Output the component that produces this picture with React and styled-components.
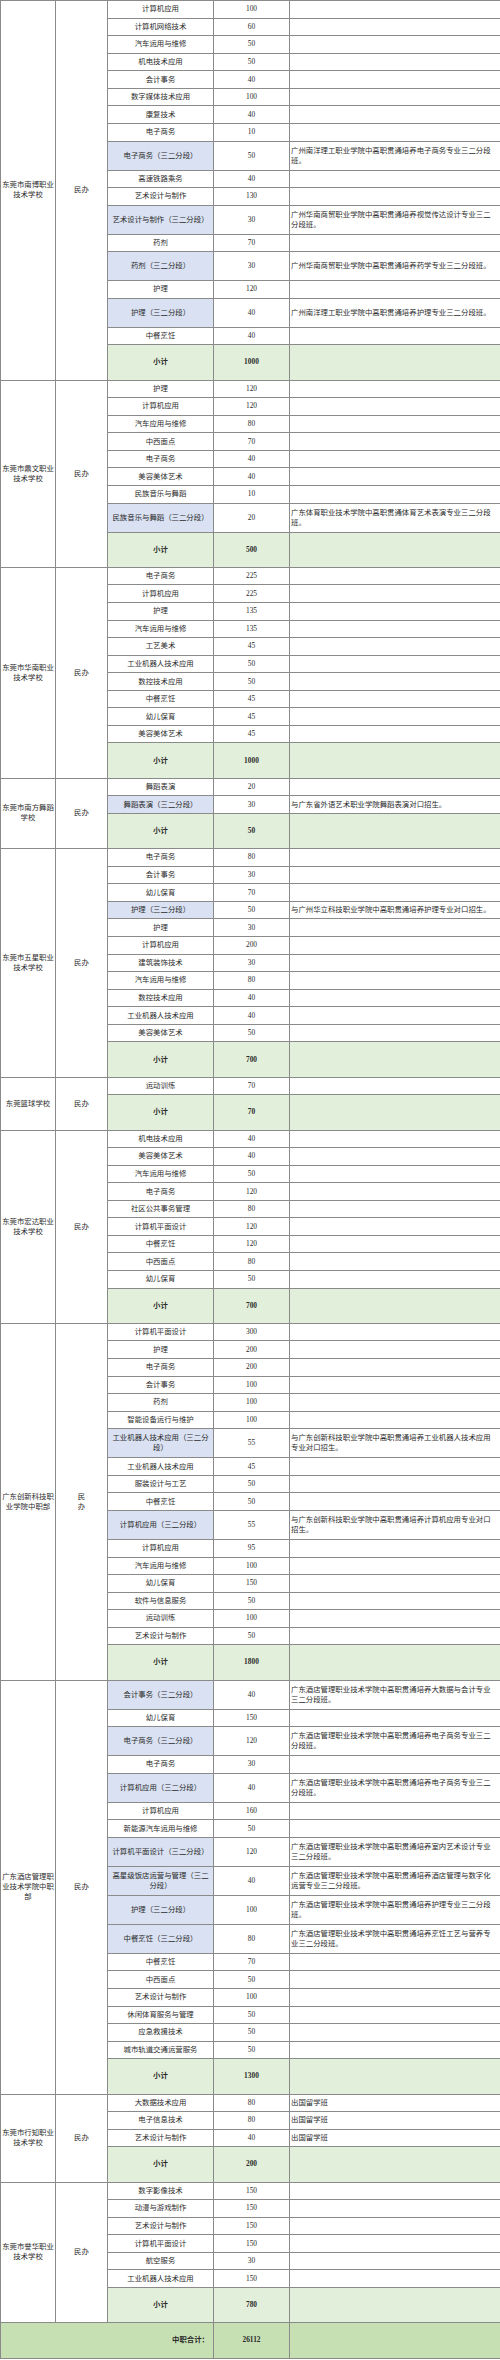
import React from "react"
import styled, { createGlobalStyle } from "styled-components"

const GlobalStyle = createGlobalStyle`
  body {
    margin: 0;
    background: #fff;
  }
`

const HEIGHTS = { row: 17.57, tall: 29, sub: 35.3 }

const TONES = {
  blue: "#d9e1f2",
  sub: "#e2efda",
  total: "#c6e0b4",
}

// the sheet is a slice of a longer table, so the grand total covers more schools than listed here
const GRAND_TOTAL = 26112

const Sheet = styled.table`
  width: 500px;
  table-layout: fixed;
  border-collapse: collapse;
  font-family: "Liberation Serif", "Noto Sans CJK SC", serif;
  font-size: 7.4px;
  line-height: 10px;
  color: #2b2b2b;
`

const Col = styled.col`
  width: ${props => props.$w}px;
`

const Row = styled.tr`
  height: ${props => HEIGHTS[props.$kind || "row"]}px;
`

const Cell = styled.td`
  border: 1px solid #8a8a8a;
  padding: 0 1px;
  text-align: center;
  vertical-align: middle;
  background: ${props => (props.$tone ? TONES[props.$tone] : "#fff")};
  font-weight: ${props => (props.$bold ? 700 : 400)};
  overflow-wrap: anywhere;
`

const NoteCell = styled(Cell)`
  text-align: left;
  padding: 0 3px 0 1px;
`

const TotalLabel = styled(Cell)`
  text-align: right;
  padding-right: 4px;
`

const n = (m, c) => ({ m, c })
const hl = (m, c, note, tall = true) => ({ m, c, note, blue: true, tall })
const out = (m, c) => ({ m, c, note: "出国留学班" })

const schools = [
  {
    name: "东莞市南博职业技术学校",
    type: "民办",
    total: 1000,
    rows: [
      n("计算机应用", 100),
      n("计算机网络技术", 60),
      n("汽车运用与维修", 50),
      n("机电技术应用", 50),
      n("会计事务", 40),
      n("数字媒体技术应用", 100),
      n("康复技术", 40),
      n("电子商务", 10),
      hl("电子商务（三二分段）", 50, "广州南洋理工职业学院中高职贯通培养电子商务专业三二分段班。"),
      n("高速铁路乘务", 40),
      n("艺术设计与制作", 130),
      hl("艺术设计与制作（三二分段）", 30, "广州华南商贸职业学院中高职贯通培养视觉传达设计专业三二分段班。"),
      n("药剂", 70),
      hl("药剂（三二分段）", 30, "广州华南商贸职业学院中高职贯通培养药学专业三二分段班。"),
      n("护理", 120),
      hl("护理（三二分段）", 40, "广州南洋理工职业学院中高职贯通培养护理专业三二分段班。"),
      n("中餐烹饪", 40),
    ],
  },
  {
    name: "东莞市鼎文职业技术学校",
    type: "民办",
    total: 500,
    rows: [
      n("护理", 120),
      n("计算机应用", 120),
      n("汽车应用与维修", 80),
      n("中西面点", 70),
      n("电子商务", 40),
      n("美容美体艺术", 40),
      n("民族音乐与舞蹈", 10),
      hl("民族音乐与舞蹈（三二分段）", 20, "广东体育职业技术学院中高职贯通体育艺术表演专业三二分段班。"),
    ],
  },
  {
    name: "东莞市华南职业技术学校",
    type: "民办",
    total: 1000,
    rows: [
      n("电子商务", 225),
      n("计算机应用", 225),
      n("护理", 135),
      n("汽车运用与维修", 135),
      n("工艺美术", 45),
      n("工业机器人技术应用", 50),
      n("数控技术应用", 50),
      n("中餐烹饪", 45),
      n("幼儿保育", 45),
      n("美容美体艺术", 45),
    ],
  },
  {
    name: "东莞市南方舞蹈学校",
    type: "民办",
    total: 50,
    rows: [
      n("舞蹈表演", 20),
      hl("舞蹈表演（三二分段）", 30, "与广东省外语艺术职业学院舞蹈表演对口招生。", false),
    ],
  },
  {
    name: "东莞市五星职业技术学校",
    type: "民办",
    total: 700,
    rows: [
      n("电子商务", 80),
      n("会计事务", 30),
      n("幼儿保育", 70),
      hl("护理（三二分段）", 50, "与广州华立科技职业学院中高职贯通培养护理专业对口招生。", false),
      n("护理", 30),
      n("计算机应用", 200),
      n("建筑装饰技术", 30),
      n("汽车运用与维修", 80),
      n("数控技术应用", 40),
      n("工业机器人技术应用", 40),
      n("美容美体艺术", 50),
    ],
  },
  {
    name: "东莞篮球学校",
    type: "民办",
    total: 70,
    rows: [n("运动训练", 70)],
  },
  {
    name: "东莞市宏达职业技术学校",
    type: "民办",
    total: 700,
    rows: [
      n("机电技术应用", 40),
      n("美容美体艺术", 40),
      n("汽车运用与维修", 50),
      n("电子商务", 120),
      n("社区公共事务管理", 80),
      n("计算机平面设计", 120),
      n("中餐烹饪", 120),
      n("中西面点", 80),
      n("幼儿保育", 50),
    ],
  },
  {
    name: "广东创新科技职业学院中职部",
    type: "民\n办",
    total: 1800,
    rows: [
      n("计算机平面设计", 300),
      n("护理", 200),
      n("电子商务", 200),
      n("会计事务", 100),
      n("药剂", 100),
      n("智能设备运行与维护", 100),
      hl("工业机器人技术应用（三二分段）", 55, "与广东创新科技职业学院中高职贯通培养工业机器人技术应用专业对口招生。"),
      n("工业机器人技术应用", 45),
      n("服装设计与工艺", 50),
      n("中餐烹饪", 50),
      hl("计算机应用（三二分段）", 55, "与广东创新科技职业学院中高职贯通培养计算机应用专业对口招生。"),
      n("计算机应用", 95),
      n("汽车运用与维修", 100),
      n("幼儿保育", 150),
      n("软件与信息服务", 50),
      n("运动训练", 100),
      n("艺术设计与制作", 50),
    ],
  },
  {
    name: "广东酒店管理职业技术学院中职部",
    type: "民办",
    total: 1300,
    rows: [
      hl("会计事务（三二分段）", 40, "广东酒店管理职业技术学院中高职贯通培养大数据与会计专业三二分段班。"),
      n("幼儿保育", 150),
      hl("电子商务（三二分段）", 120, "广东酒店管理职业技术学院中高职贯通培养电子商务专业三二分段班。"),
      n("电子商务", 30),
      hl("计算机应用（三二分段）", 40, "广东酒店管理职业技术学院中高职贯通培养电子商务专业三二分段班。"),
      n("计算机应用", 160),
      n("新能源汽车运用与维修", 50),
      hl("计算机平面设计（三二分段）", 120, "广东酒店管理职业技术学院中高职贯通培养室内艺术设计专业三二分段班。"),
      hl("高星级饭店运营与管理（三二分段）", 40, "广东酒店管理职业技术学院中高职贯通培养酒店管理与数字化运营专业三二分段班。"),
      hl("护理（三二分段）", 100, "广东酒店管理职业技术学院中高职贯通培养护理专业三二分段班。"),
      hl("中餐烹饪（三二分段）", 80, "广东酒店管理职业技术学院中高职贯通培养烹饪工艺与营养专业三二分段班。"),
      n("中餐烹饪", 70),
      n("中西面点", 50),
      n("艺术设计与制作", 100),
      n("休闲体育服务与管理", 50),
      n("应急救援技术", 50),
      n("城市轨道交通运营服务", 50),
    ],
  },
  {
    name: "东莞市行知职业技术学校",
    type: "民办",
    total: 200,
    rows: [
      out("大数据技术应用", 80),
      out("电子信息技术", 80),
      out("艺术设计与制作", 40),
    ],
  },
  {
    name: "东莞市誉华职业技术学校",
    type: "民办",
    total: 780,
    rows: [
      n("数字影像技术", 150),
      n("动漫与游戏制作", 150),
      n("艺术设计与制作", 150),
      n("计算机平面设计", 150),
      n("航空服务", 30),
      n("工业机器人技术应用", 150),
    ],
  },
]

const lines = text =>
  text.split("\n").map((part, i) => (
    <React.Fragment key={i}>
      {i > 0 && <br />}
      {part}
    </React.Fragment>
  ))

const SchoolBlock = ({ school }) => {
  const span = school.rows.length + 1
  return (
    <>
      {school.rows.map((row, i) => (
        <Row key={i} $kind={row.tall ? "tall" : "row"}>
          {i === 0 && (
            <>
              <Cell rowSpan={span}>{school.name}</Cell>
              <Cell rowSpan={span}>{lines(school.type)}</Cell>
            </>
          )}
          <Cell $tone={row.blue ? "blue" : undefined}>{row.m}</Cell>
          <Cell>{row.c}</Cell>
          <NoteCell>{row.note}</NoteCell>
        </Row>
      ))}
      <Row $kind="sub">
        <Cell $tone="sub" $bold>
          小计
        </Cell>
        <Cell $tone="sub" $bold>
          {school.total}
        </Cell>
        <NoteCell $tone="sub" />
      </Row>
    </>
  )
}

const App = () => (
  <>
    <GlobalStyle />
    <Sheet>
      <colgroup>
        <Col $w={55} />
        <Col $w={52} />
        <Col $w={106} />
        <Col $w={76} />
        <Col $w={211} />
      </colgroup>
      <tbody>
        {schools.map(school => (
          <SchoolBlock key={school.name} school={school} />
        ))}
        <Row $kind="sub">
          <TotalLabel colSpan={3} $tone="total" $bold>
            中职合计：
          </TotalLabel>
          <Cell $tone="total" $bold>
            {GRAND_TOTAL}
          </Cell>
          <NoteCell $tone="total" />
        </Row>
      </tbody>
    </Sheet>
  </>
)

export default App
